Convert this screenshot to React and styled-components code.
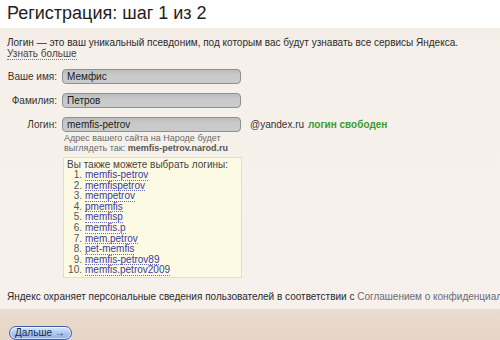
import React from "react";
import styled, { createGlobalStyle } from "styled-components";

const Global = createGlobalStyle`
  html, body { margin: 0; padding: 0; background: #ffffff; }
  body { width: 500px; height: 340px; overflow: hidden; font-family: "Liberation Sans", Arial, sans-serif; color: #333; }
  #root { width: 500px; height: 340px; }
`;

const Page = styled.div`
  width: 500px;
  height: 340px;
  display: flex;
  flex-direction: column;
`;

const Header = styled.header`
  height: 28px;
  flex: none;
  background: #ffffff;
  padding-left: 7px;
  box-sizing: border-box;
`;

const Title = styled.h1`
  margin: 0;
  padding-top: 3px;
  font-size: 18px;
  line-height: 21px;
  font-weight: normal;
  color: #1e1e1e;
  white-space: nowrap;
`;

const Main = styled.main`
  flex: none;
  height: 281px;
  box-sizing: border-box;
  background: linear-gradient(#f4ede6, #f6f0ea 20px, #f6f1ec);
  padding: 9px 0 0 7px;
  display: flex;
  flex-direction: column;
  overflow: hidden;
`;

const Intro = styled.p`
  margin: 0;
  font-size: 10px;
  line-height: 11px;
  color: #2b2b2b;
  white-space: nowrap;
`;

const DottedLink = styled.a`
  color: ${(p) => p.$color || "#444"};
  text-decoration: none;
  border-bottom: 1px dotted ${(p) => p.$line || "#777"};
  cursor: pointer;
`;

const Form = styled.div`
  margin-top: 10px;
  display: grid;
  grid-template-columns: 50px 179px auto;
  column-gap: 5px;
  row-gap: 9px;
  align-items: center;
`;

const Label = styled.label`
  font-size: 10px;
  color: #333;
  text-align: right;
  white-space: nowrap;
`;

const Input = styled.div`
  height: 15px;
  box-sizing: border-box;
  background: linear-gradient(#bdbdbd, #c9c9c9 40%, #cbcbcb);
  border: 1px solid #8f8f8f;
  border-radius: 4px;
  font-size: 10px;
  line-height: 13px;
  padding-left: 4px;
  color: #1a1a1a;
`;

const After = styled.div`
  font-size: 10px;
  color: #333;
  white-space: nowrap;
  display: flex;
  gap: 4px;
  padding-left: 4px;
`;

const Free = styled.span`
  color: #3d9a2e;
  font-weight: bold;
`;

const Under = styled.div`
  margin-left: 56px;
  width: 179px;
  display: flex;
  flex-direction: column;
`;

const Hint = styled.p`
  margin: 1px 0 0 0;
  padding-left: 1px;
  font-size: 9px;
  line-height: 10px;
  color: #6a6a6a;
  white-space: nowrap;
  b { color: #555; font-weight: bold; }
`;

const Suggest = styled.div`
  margin-top: 4px;
  height: 121px;
  box-sizing: border-box;
  background: #fdfae4;
  border: 1px solid #e6dfb0;
  padding: 1px 0 0 3px;
`;

const SuggestHead = styled.div`
  font-size: 10px;
  line-height: 11px;
  color: #444;
`;

const List = styled.ol`
  margin: 0;
  padding: 0;
  list-style: none;
`;

const Item = styled.li`
  display: flex;
  font-size: 10px;
  line-height: 10.6px;
  height: 10.6px;
`;

const Num = styled.span`
  width: 15px;
  text-align: right;
  color: #555;
  padding-right: 3px;
  flex: none;
`;

const Footnote = styled.p`
  margin: 13px 0 0 0;
  font-size: 10px;
  line-height: 11px;
  color: #2b2b2b;
  white-space: nowrap;
  overflow: hidden;
`;

const Footer = styled.footer`
  flex: 1;
  background: linear-gradient(#e9dbce, #e6d6c7);
  padding: 13px 0 0 9px;
  box-sizing: border-box;
`;

const Button = styled.button`
  height: 14px;
  padding: 0 6px 0 5px;
  border: 1px solid #3f5fa8;
  border-radius: 7px;
  background: linear-gradient(#dbe8fb, #a9c4ef 55%, #8fb1e8);
  box-shadow: inset 0 0 0 1px rgba(255,255,255,0.6);
  font-family: "Liberation Sans", Arial, sans-serif;
  font-size: 10px;
  line-height: 12px;
  color: #1b2a4a;
  cursor: pointer;
`;

const logins = [
  "memfis-petrov",
  "memfispetrov",
  "mempetrov",
  "pmemfis",
  "memfisp",
  "memfis.p",
  "mem.petrov",
  "pet-memfis",
  "memfis-petrov89",
  "memfis.petrov2009",
];

export default function App() {
  return (
    <>
      <Global />
      <Page>
        <Header>
          <Title>Регистрация: шаг 1 из 2</Title>
        </Header>
        <Main>
          <Intro>
            Логин — это ваш уникальный псевдоним, под которым вас будут узнавать все сервисы Яндекса.
            <br />
            <DottedLink>Узнать больше</DottedLink>
          </Intro>
          <Form>
            <Label>Ваше имя:</Label>
            <Input>Мемфис</Input>
            <span />
            <Label>Фамилия:</Label>
            <Input>Петров</Input>
            <span />
            <Label>Логин:</Label>
            <Input>memfis-petrov</Input>
            <After>
              <span>@yandex.ru</span>
              <Free>логин свободен</Free>
            </After>
          </Form>
          <Under>
            <Hint>
              Адрес вашего сайта на Народе будет
              <br />
              выглядеть так: <b>memfis-petrov.narod.ru</b>
            </Hint>
            <Suggest>
              <SuggestHead>Вы также можете выбрать логины:</SuggestHead>
              <List>
                {logins.map((l, i) => (
                  <Item key={l}>
                    <Num>{i + 1}.</Num>
                    <DottedLink $color="#3a3a9e" $line="#6a6ab8">{l}</DottedLink>
                  </Item>
                ))}
              </List>
            </Suggest>
          </Under>
          <Footnote>
            Яндекс охраняет персональные сведения пользователей в соответствии с{" "}
            <DottedLink $color="#6a6a7a" $line="#999">Соглашением о конфиденциальности</DottedLink>
          </Footnote>
        </Main>
        <Footer>
          <Button>Дальше →</Button>
        </Footer>
      </Page>
    </>
  );
}
